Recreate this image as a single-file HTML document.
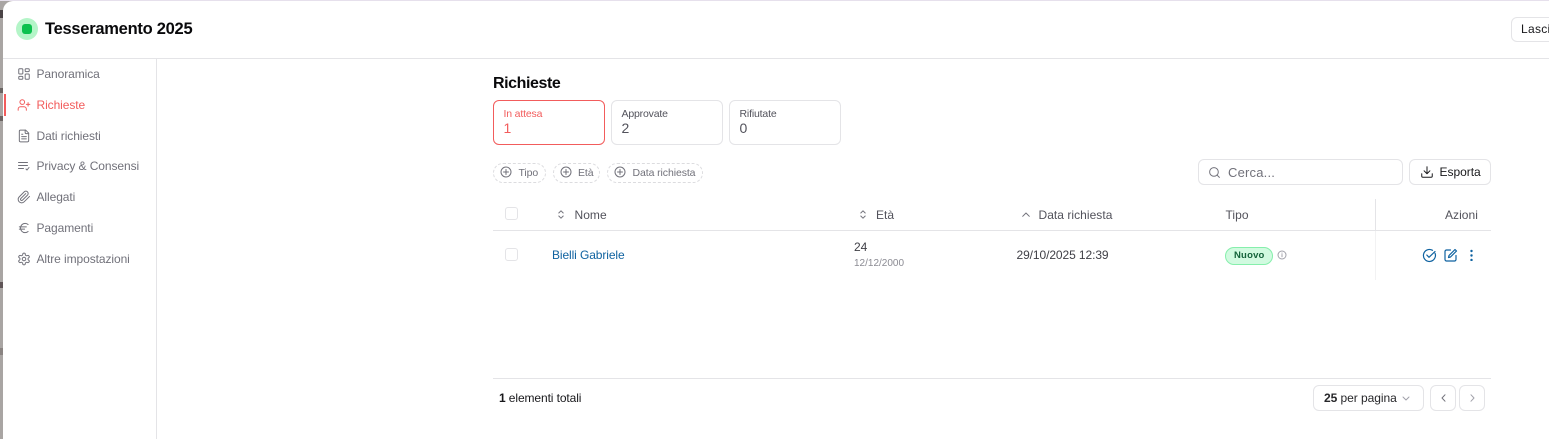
<!DOCTYPE html>
<html lang="it"><head><meta charset="utf-8"><title>Tesseramento 2025</title>
<style>
html,body{margin:0;padding:0;width:1549px;height:439px;overflow:hidden;background:#a9a5a3}
body{font-family:"Liberation Sans",sans-serif;position:relative}
#top{position:absolute;left:0;top:0;width:1549px;height:1px;background:#e6e0ec}
#m{position:absolute;left:3px;top:1px;width:1546px;height:438px;background:#fff;border-top-left-radius:10px;overflow:hidden}
.a{position:absolute;white-space:nowrap;line-height:1}
.l{position:absolute;background:#e4e4e7}
svg{position:absolute;fill:none;stroke-linecap:round;stroke-linejoin:round}
.nav{font-size:12px;color:#71717a;letter-spacing:-.08px}
.ic{stroke:#71717a;stroke-width:1}
.i24{stroke:#71717a;stroke-width:1.7;left:17px}
.card{position:absolute;top:100px;width:110px;height:43px;border:1px solid #e4e4e7;border-radius:6px;background:#fff}
.cl{position:absolute;left:9.5px;top:8px;font-size:10.5px;line-height:11px;color:#52525b;letter-spacing:-.17px;white-space:nowrap}
.cn{position:absolute;left:9.5px;top:19px;font-size:14px;line-height:16px;color:#52525b;letter-spacing:.2px}
.chip{position:absolute;top:163px;height:18px;border:1px dashed #dcdcdf;border-radius:10px}
.ct{font-size:10.5px;color:#71717a;letter-spacing:-.09px;top:167.5px}
.th{font-size:12px;color:#52525b;letter-spacing:.04px;top:209px}
.btn{position:absolute;border:1px solid #e4e4e7;border-radius:6px;background:#fff;box-sizing:border-box}
</style></head><body>
<div id="top"></div>
<div class="a" style="left:0;top:10px;width:3px;height:8px;background:#4a4446"></div>
<div class="a" style="left:0;top:88px;width:3px;height:5px;background:#6a6462"></div>
<div class="a" style="left:0;top:116px;width:3px;height:5px;background:#6a6462"></div>
<div class="a" style="left:0;top:282px;width:3px;height:6px;background:#5f5557"></div>
<div class="a" style="left:0;top:348px;width:3px;height:7px;background:#8a8482"></div>
<div id="m"></div>

<div class="a" style="left:16px;top:18px;width:22px;height:22px;border-radius:50%;background:#b4f5c8"></div>
<div class="a" style="left:22px;top:24px;width:10px;height:10px;border-radius:3px;background:#0cc14e"></div>
<div class="a" style="left:45px;top:21px;font-size:16.5px;font-weight:700;color:#09090b;letter-spacing:-.27px">Tesseramento 2025</div>
<div class="btn" style="left:1511px;top:17px;width:60px;height:25px"></div>
<div class="a" style="left:1521px;top:23px;font-size:12px;color:#18181b;letter-spacing:.3px">Lasci</div>
<div class="l" style="left:3px;top:58px;width:1546px;height:1px"></div>
<div class="l" style="left:156px;top:59px;width:1px;height:380px"></div>

<div class="a" style="left:4px;top:94px;width:2px;height:22px;background:#f25c5c"></div>
<svg class="i24" style="top:67px" width="14" height="14" viewBox="0 0 24 24"><rect x="3" y="3" width="7" height="9" rx="1.500"/><rect x="14" y="3" width="7" height="5" rx="1.500"/><rect x="14" y="12" width="7" height="9" rx="1.500"/><rect x="3" y="16" width="7" height="5" rx="1.500"/></svg>
<div class="a nav" style="left:36.5px;top:68px">Panoramica</div>
<svg class="i24" style="top:98px;stroke:#f25c5c" width="14" height="14" viewBox="0 0 24 24"><path d="M16 21v-2a4 4 0 0 0-4-4H6a4 4 0 0 0-4 4v2"/><circle cx="9" cy="7" r="4"/><path d="M19 8v6M22 11h-6"/></svg>
<div class="a nav" style="left:36.5px;top:99px;color:#f25c5c">Richieste</div>
<svg class="i24" style="top:129px" width="14" height="14" viewBox="0 0 24 24"><path d="M15 2H6a2 2 0 0 0-2 2v16a2 2 0 0 0 2 2h12a2 2 0 0 0 2-2V7Z"/><path d="M14 2v4a2 2 0 0 0 2 2h4M16 13H8M16 17H8M10 9H8"/></svg>
<div class="a nav" style="left:36.5px;top:130px">Dati richiesti</div>
<svg class="ic" style="left:18px;top:160px" width="12" height="12" viewBox="0 0 12 12"><path d="M.5 2.500h9M.5 5.500h9M.5 8.500h5M8 9l1 1 2-2.500"/></svg>
<div class="a nav" style="left:36.5px;top:160px">Privacy &amp; Consensi</div>
<svg class="i24" style="top:190px" width="14" height="14" viewBox="0 0 24 24"><path d="M21.44 11.05l-9.19 9.19a6 6 0 0 1-8.49-8.49l8.57-8.57A4 4 0 1 1 18 8.84l-8.59 8.57a2 2 0 0 1-2.83-2.83l8.49-8.48"/></svg>
<div class="a nav" style="left:36.5px;top:191px">Allegati</div>
<svg class="i24" style="top:221px" width="14" height="14" viewBox="0 0 24 24"><path d="M4 10h12M4 14h9M19 6a7.700 7.700 0 0 0-5.200-2A7.900 7.900 0 0 0 6 12c0 4.400 3.500 8 7.800 8 2 0 3.800-.8 5.200-2"/></svg>
<div class="a nav" style="left:36.5px;top:222px">Pagamenti</div>
<svg class="i24" style="top:252px" width="14" height="14" viewBox="0 0 24 24"><path d="M12.220 2h-.44a2 2 0 0 0-2 2v.18a2 2 0 0 1-1 1.730l-.43.25a2 2 0 0 1-2 0l-.15-.08a2 2 0 0 0-2.730.73l-.22.38a2 2 0 0 0 .73 2.730l.15.1a2 2 0 0 1 1 1.720v.51a2 2 0 0 1-1 1.740l-.15.09a2 2 0 0 0-.73 2.730l.22.38a2 2 0 0 0 2.730.73l.15-.08a2 2 0 0 1 2 0l.43.25a2 2 0 0 1 1 1.730V20a2 2 0 0 0 2 2h.44a2 2 0 0 0 2-2v-.18a2 2 0 0 1 1-1.730l.43-.25a2 2 0 0 1 2 0l.15.08a2 2 0 0 0 2.730-.73l.22-.39a2 2 0 0 0-.73-2.730l-.15-.08a2 2 0 0 1-1-1.740v-.5a2 2 0 0 1 1-1.740l.15-.09a2 2 0 0 0 .73-2.730l-.22-.38a2 2 0 0 0-2.730-.73l-.15.08a2 2 0 0 1-2 0l-.43-.25a2 2 0 0 1-1-1.730V4a2 2 0 0 0-2-2z"/><circle cx="12" cy="12" r="3"/></svg>
<div class="a nav" style="left:36.5px;top:253px">Altre impostazioni</div>

<div class="a" style="left:493px;top:76px;font-size:16px;font-weight:700;color:#09090b;letter-spacing:-.42px">Richieste</div>
<div class="card" style="left:493px;border-color:#f25c5c"><div class="cl" style="color:#f25c5c">In attesa</div><div class="cn" style="color:#f25c5c">1</div></div>
<div class="card" style="left:611px"><div class="cl">Approvate</div><div class="cn">2</div></div>
<div class="card" style="left:729px"><div class="cl">Rifiutate</div><div class="cn">0</div></div>

<div class="chip" style="left:493px;width:51px"></div>
<div class="chip" style="left:553px;width:45px"></div>
<div class="chip" style="left:607px;width:94px"></div>
<svg class="ic" style="left:500px;top:166px" width="12" height="12" viewBox="0 0 12 12"><circle cx="6" cy="6" r="5"/><path d="M6 3.500v5M3.500 6h5"/></svg>
<svg class="ic" style="left:560px;top:166px" width="12" height="12" viewBox="0 0 12 12"><circle cx="6" cy="6" r="5"/><path d="M6 3.500v5M3.500 6h5"/></svg>
<svg class="ic" style="left:614px;top:166px" width="12" height="12" viewBox="0 0 12 12"><circle cx="6" cy="6" r="5"/><path d="M6 3.500v5M3.500 6h5"/></svg>
<div class="a ct" style="left:518.500px">Tipo</div>
<div class="a ct" style="left:578px">Età</div>
<div class="a ct" style="left:632.500px">Data richiesta</div>

<div class="btn" style="left:1198px;top:159px;width:205px;height:26px"></div>
<svg style="left:1208px;top:166px;stroke:#71717a;stroke-width:1.800" width="13" height="13" viewBox="0 0 24 24"><circle cx="11" cy="11" r="8"/><path d="M21 21l-4.300-4.300"/></svg>
<div class="a" style="left:1228px;top:165.500px;font-size:13px;color:#71717a;letter-spacing:.2px">Cerca...</div>
<div class="btn" style="left:1409px;top:159px;width:82px;height:26px"></div>
<svg style="left:1420px;top:165px;stroke:#18181b;stroke-width:1.700" width="14" height="14" viewBox="0 0 24 24"><path d="M21 15v4a2 2 0 0 1-2 2H5a2 2 0 0 1-2-2v-4M7 10l5 5 5-5M12 15V3"/></svg>
<div class="a" style="left:1439.500px;top:166px;font-size:12px;color:#18181b;letter-spacing:-.02px">Esporta</div>

<div class="a" style="left:505px;top:207px;width:11px;height:11px;border:1px solid #e4e4e7;border-radius:3px"></div>
<svg class="ic" style="left:558px;top:210px" width="6" height="9" viewBox="0 0 6 9"><path d="M.8 3L3 .8 5.200 3M.8 6L3 8.200 5.200 6"/></svg>
<div class="a th" style="left:574.500px">Nome</div>
<svg class="ic" style="left:860px;top:210px" width="6" height="9" viewBox="0 0 6 9"><path d="M.8 3L3 .8 5.200 3M.8 6L3 8.200 5.200 6"/></svg>
<div class="a th" style="left:876px">Età</div>
<svg class="ic" style="left:1022px;top:212px" width="8" height="5" viewBox="0 0 8 5"><path d="M.7 4.300L4 1l3.300 3.300"/></svg>
<div class="a th" style="left:1038.500px">Data richiesta</div>
<div class="a th" style="left:1225.500px">Tipo</div>
<div class="a th" style="left:1445px">Azioni</div>
<div class="l" style="left:493px;top:230px;width:998px;height:1px"></div>
<div class="a" style="left:1375px;top:199px;width:1px;height:32px;background:#e4e4e7"></div>
<div class="a" style="left:1375px;top:231px;width:1px;height:49px;background:#f2f2f3"></div>

<div class="a" style="left:505px;top:248px;width:11px;height:11px;border:1px solid #e4e4e7;border-radius:3px"></div>
<div class="a" style="left:552px;top:249px;font-size:12px;color:#0f62a0;letter-spacing:-.1px">Bielli Gabriele</div>
<div class="a" style="left:854px;top:241px;font-size:12px;color:#3f3f46">24</div>
<div class="a" style="left:854px;top:259px;font-size:10px;color:#8b8b93">12/12/2000</div>
<div class="a" style="left:1016.500px;top:249px;font-size:12px;color:#3f3f46;letter-spacing:-.09px">29/10/2025 12:39</div>
<div class="a" style="left:1225px;top:247px;width:46px;height:16px;background:#d1fae0;border:1px solid #86efac;border-radius:9px"></div>
<div class="a" style="left:1234px;top:250.500px;font-size:9.500px;font-weight:700;color:#14633a;letter-spacing:.2px">Nuovo</div>
<svg style="left:1277px;top:250px;stroke:#a1a1aa;stroke-width:1" width="10" height="10" viewBox="0 0 10 10"><circle cx="5" cy="5" r="4"/><path d="M5 4.500v2.200M5 3v.2"/></svg>
<svg style="left:1422px;top:248px;stroke:#0f62a0;stroke-width:1.200" width="15" height="15" viewBox="0 0 15 15"><path d="M13 5.200A6 6 0 1 1 10.500 2.300"/><path d="M4.800 7l2.200 2.300L13 3.500"/></svg>
<svg style="left:1444px;top:248px;stroke:#0f62a0;stroke-width:1.200" width="14" height="14" viewBox="0 0 14 14"><path d="M6.500 2H2.500A1.500 1.500 0 0 0 1 3.500v8A1.500 1.500 0 0 0 2.500 13h8a1.500 1.500 0 0 0 1.500-1.500V7.500"/><path d="M11 1.500l1.500 1.500-6 6-2 .5.500-2z"/></svg>
<svg style="left:1470px;top:249px;fill:#0f62a0" width="3" height="12" viewBox="0 0 3 12"><circle cx="1.500" cy="2" r="1.200"/><circle cx="1.500" cy="6.500" r="1.200"/><circle cx="1.500" cy="11" r="1.200"/></svg>

<div class="l" style="left:493px;top:378px;width:998px;height:1px"></div>
<div class="a" style="left:499px;top:392px;font-size:12px;color:#18181b;letter-spacing:-.1px"><b>1</b> elementi totali</div>
<div class="btn" style="left:1313px;top:385px;width:111px;height:26px"></div>
<div class="a" style="left:1324px;top:392px;font-size:12px;color:#27272a;letter-spacing:-.05px"><b>25</b> per pagina</div>
<svg style="left:1402px;top:396px;stroke:#a1a1aa;stroke-width:1" width="8" height="5" viewBox="0 0 8 5"><path d="M1 1l3 3 3-3"/></svg>
<div class="btn" style="left:1430px;top:385px;width:26px;height:26px"></div>
<div class="btn" style="left:1459px;top:385px;width:26px;height:26px"></div>
<svg style="left:1441px;top:394px;stroke:#71717a;stroke-width:1" width="5" height="8" viewBox="0 0 5 8"><path d="M4 .8L1 4l3 3.200"/></svg>
<svg style="left:1470px;top:394px;stroke:#a1a1aa;stroke-width:1" width="5" height="8" viewBox="0 0 5 8"><path d="M1 .8L4 4 1 7.200"/></svg>
</body></html>
